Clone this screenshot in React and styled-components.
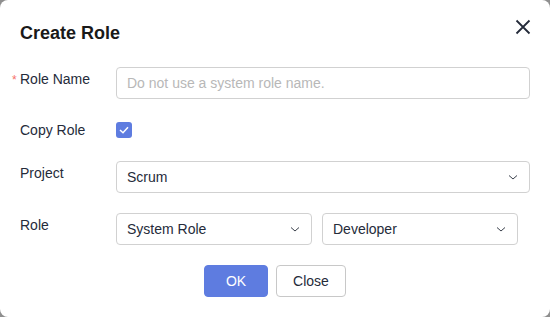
import React from "react";
import styled, { createGlobalStyle } from "styled-components";

const GlobalStyle = createGlobalStyle`
  html, body {
    margin: 0;
    padding: 0;
    background: #8f8f8f;
  }
  body {
    font-family: "Liberation Sans", Arial, sans-serif;
  }
`;

const Dialog = styled.div`
  width: 550px;
  height: 317px;
  box-sizing: border-box;
  background: #ffffff;
  border-radius: 8px;
  padding: 20px 20px 0 20px;
  color: #252b3a;
  display: flex;
  flex-direction: column;
`;

const Header = styled.div`
  display: flex;
  justify-content: space-between;
  align-items: center;
  height: 26px;
  margin-bottom: 21px;
`;

const Title = styled.h2`
  margin: 0;
  font-size: 18px;
  line-height: 26px;
  font-weight: bold;
  color: #191919;
`;

const CloseButton = styled.button`
  border: none;
  background: none;
  padding: 0;
  margin-right: -2px;
  margin-top: -12px;
  width: 18px;
  height: 18px;
  display: flex;
  align-items: center;
  justify-content: center;
  cursor: pointer;
`;

const Form = styled.div`
  display: flex;
  flex-direction: column;
  gap: 20px;
`;

const Row = styled.div`
  display: flex;
  align-items: flex-start;
`;

const Label = styled.label`
  width: 96px;
  flex-shrink: 0;
  font-size: 14px;
  line-height: ${(p) => (p.$small ? "22px" : "24px")};
  color: #252b3a;
  position: relative;
`;

const Required = styled.span`
  position: absolute;
  left: -8px;
  top: 1px;
  color: #f66f6a;
  font-size: 12px;
`;

const Control = styled.div`
  flex: 1;
  display: flex;
  gap: 10px;
  padding-right: ${(p) => p.$inset || 0}px;
`;

const TextInput = styled.input`
  width: 100%;
  height: 32px;
  box-sizing: border-box;
  border: 1px solid #d1d1d1;
  border-radius: 4px;
  padding: 0 10px;
  font-family: "Liberation Sans", Arial, sans-serif;
  font-size: 14px;
  color: #252b3a;
  outline: none;
  &::placeholder {
    color: #b8b8b8;
  }
`;

const CheckArea = styled.div`
  height: 22px;
  display: flex;
  align-items: center;
`;

const CheckBox = styled.span`
  width: 16px;
  height: 16px;
  border-radius: 3px;
  background: #5e7ce0;
  display: flex;
  align-items: center;
  justify-content: center;
`;

const Select = styled.div`
  flex: 1;
  height: 32px;
  box-sizing: border-box;
  border: 1px solid #d1d1d1;
  border-radius: 4px;
  padding: 0 10px 0 10px;
  display: flex;
  align-items: center;
  justify-content: space-between;
  font-size: 14px;
  color: #252b3a;
`;

const Footer = styled.div`
  display: flex;
  justify-content: center;
  gap: 8px;
  margin-top: 20px;
`;

const Button = styled.button`
  height: 32px;
  min-width: ${(p) => (p.$primary ? 64 : 70)}px;
  box-sizing: border-box;
  border-radius: 4px;
  font-family: "Liberation Sans", Arial, sans-serif;
  font-size: 14px;
  cursor: pointer;
  border: 1px solid ${(p) => (p.$primary ? "#5e7ce0" : "#c8c8c8")};
  background: ${(p) => (p.$primary ? "#5e7ce0" : "#ffffff")};
  color: ${(p) => (p.$primary ? "#ffffff" : "#252b3a")};
`;

const Chevron = () => (
  <svg width="12" height="8" viewBox="0 0 12 8">
    <path d="M2 2.5 L6 6 L10 2.5" fill="none" stroke="#3a3f4b" strokeWidth="1" />
  </svg>
);

const SelectBox = ({ value }) => (
  <Select>
    <span>{value}</span>
    <Chevron />
  </Select>
);

export default function App() {
  return (
    <>
      <GlobalStyle />
      <Dialog>
        <Header>
          <Title>Create Role</Title>
          <CloseButton aria-label="close">
            <svg width="16" height="16" viewBox="0 0 16 16">
              <path d="M1.5 1.5 L14.5 14.5 M14.5 1.5 L1.5 14.5" stroke="#252b3a" strokeWidth="1.8" />
            </svg>
          </CloseButton>
        </Header>
        <Form>
          <Row>
            <Label>
              <Required>*</Required>
              Role Name
            </Label>
            <Control>
              <TextInput placeholder="Do not use a system role name." />
            </Control>
          </Row>
          <Row>
            <Label $small>Copy Role</Label>
            <CheckArea>
              <CheckBox>
                <svg width="10" height="8" viewBox="0 0 10 8">
                  <path d="M1 4 L4 6.8 L9 1.2" fill="none" stroke="#fff" strokeWidth="1.5" />
                </svg>
              </CheckBox>
            </CheckArea>
          </Row>
          <Row>
            <Label>Project</Label>
            <Control>
              <SelectBox value="Scrum" />
            </Control>
          </Row>
          <Row>
            <Label>Role</Label>
            <Control $inset={12}>
              <SelectBox value="System Role" />
              <SelectBox value="Developer" />
            </Control>
          </Row>
        </Form>
        <Footer>
          <Button $primary>OK</Button>
          <Button>Close</Button>
        </Footer>
      </Dialog>
    </>
  );
}
